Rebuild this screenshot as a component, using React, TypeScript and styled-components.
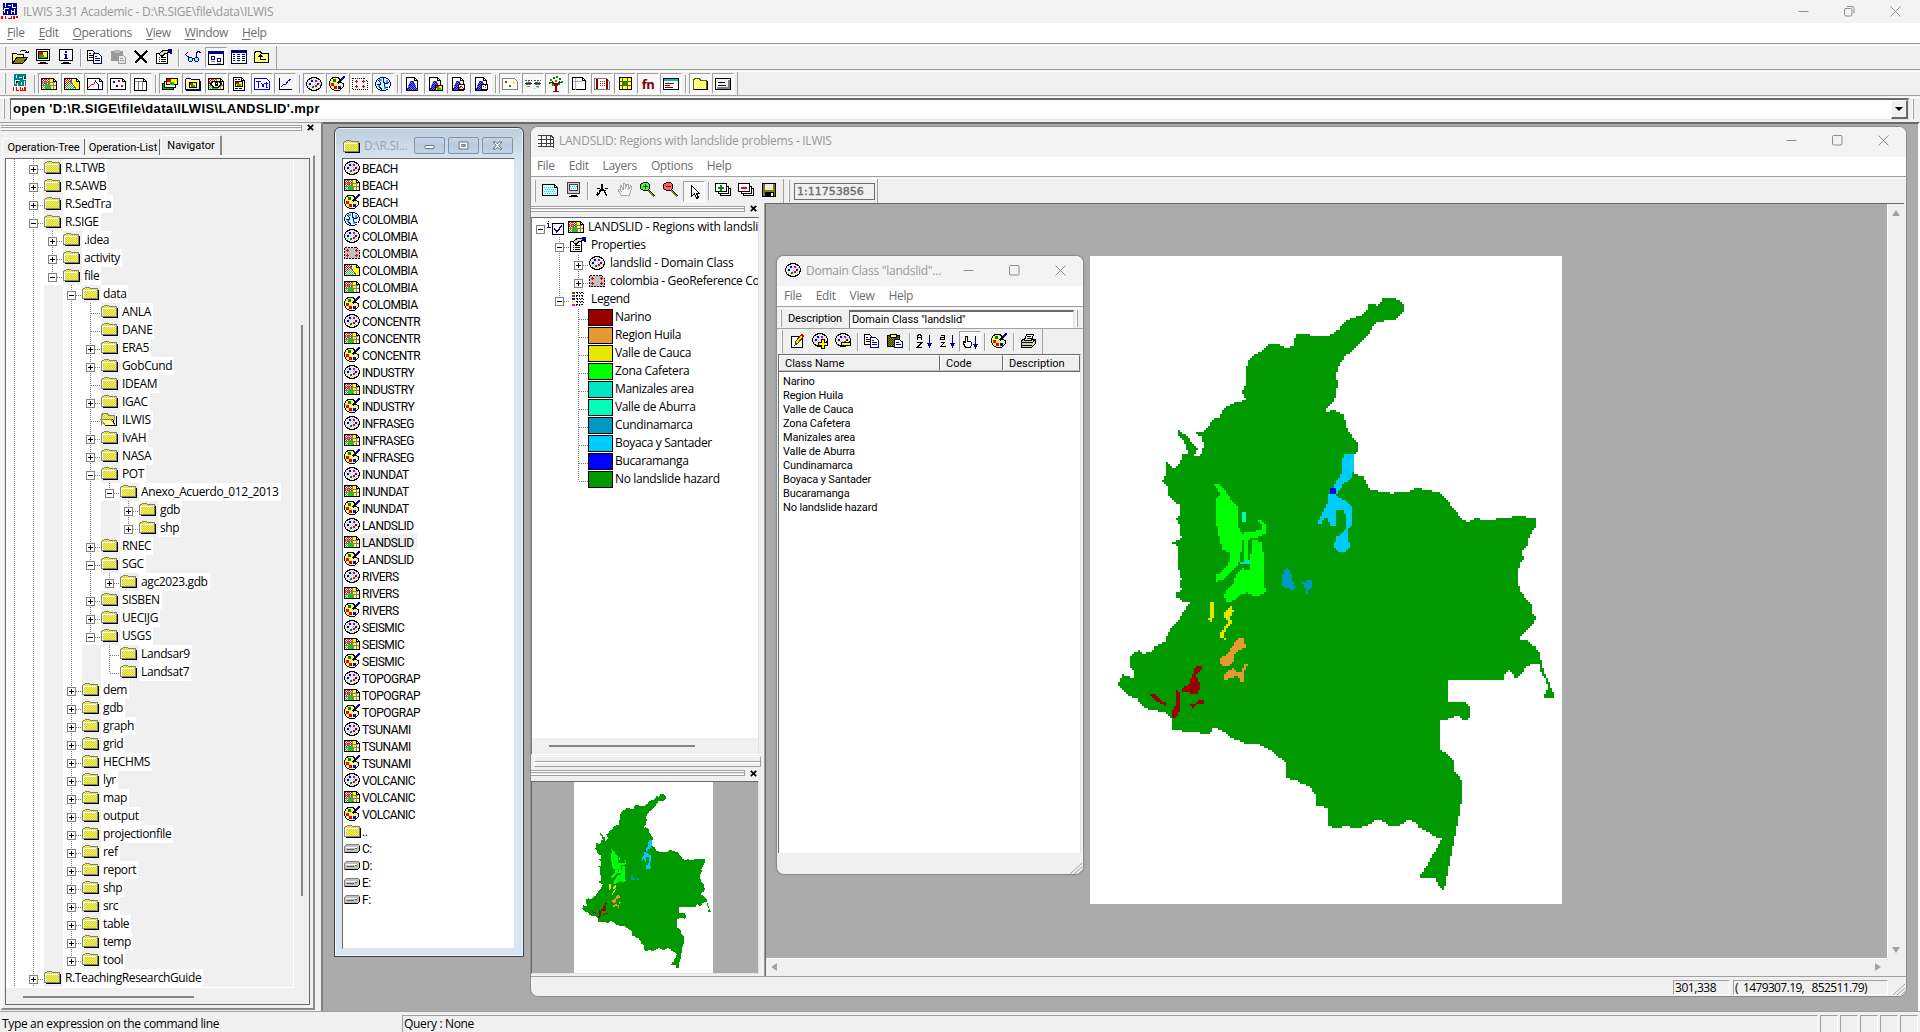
import React from "react";
import styled, { createGlobalStyle, css } from "styled-components";

const UI = `"Open Sans", "Noto Sans", sans-serif`;
const MS = `"Roboto", "Liberation Sans", sans-serif`;
const FACE = "#f0f0f0";
const DESK = "#ababab";

const Global = createGlobalStyle`
  html, body { margin: 0; padding: 0; overflow: hidden; }
  * { box-sizing: border-box; }
  body { font-family: ${UI}; font-size: 12px; color: #000; }
`;

/* ---------- icons ---------- */

const Defs = styled.svg`
  position: absolute;
  width: 0;
  height: 0;
`;

const dither: [string, string, string][] = [
  ["dR", "#ff0000", "#fff"],
  ["dG", "#00e000", "#fff"],
  ["dY", "#ffff00", "#fff"],
  ["dF", "#ffff00", "#c8c890"],
  ["dK", "#d4d4d4", "#fff"],
  ["dB", "#0000b0", "#7070ff"],
  ["dC", "#00e0e0", "#fff"],
  ["dO", "#808000", "#404000"],
];

const PatternDefs = () => (
  <Defs aria-hidden="true">
    <defs>
      {dither.map(([id, a, b]) => (
        <pattern key={id} id={id} width="2" height="2" patternUnits="userSpaceOnUse">
          <rect width="2" height="2" fill={b} />
          <rect width="1" height="1" fill={a} />
          <rect x="1" y="1" width="1" height="1" fill={a} />
        </pattern>
      ))}
    </defs>
  </Defs>
);

const IconSvg = styled.svg`
  display: block;
  flex: none;
  width: 16px;
  height: 16px;
  shape-rendering: crispEdges;
  overflow: visible;
`;

const page = "M.5 2.5h12l3 3v8h-15z";
const tall = "M2.5 1.5h8l3 3v10h-11z";

const Dots = ({ p, c, s = 2 }: { p: number[][]; c: string[]; s?: number }) => (
  <>
    {p.map(([x, y], i) => (
      <rect key={i} x={x} y={y} width={s} height={s} fill={c[i % c.length]} />
    ))}
  </>
);

const Doc = ({ x, y, s = "#000080" }: { x: number; y: number; s?: string }) => (
  <g transform={`translate(${x} ${y})`}>
    <path d="M.5.5h5l3 3v7h-8z" fill="#fff" stroke={s} />
    <path d="M2 3.5h2M2 5.5h5M2 7.5h5" stroke={s} />
  </g>
);

const RasterBody = () => (
  <>
    <path d={page} fill="#fff" stroke="#000" />
    <rect x="1" y="3" width="7" height="6" fill="url(#dR)" />
    <rect x="4" y="8" width="6" height="5" fill="#00e000" />
    <rect x="1" y="9" width="3" height="4" fill="url(#dG)" />
    <rect x="9" y="3" width="3" height="6" fill="#ffff00" />
    <rect x="10" y="8" width="5" height="5" fill="url(#dY)" />
    <path d="M4.5 3v10M8.5 3v10M12.5 6v7M1 6.5h13M1 9.5h14" stroke="#808070" />
    <path d="M12.5 2.5v3h3" fill="none" stroke="#000" />
  </>
);

const MiniMap = ({ x, y }: { x: number; y: number }) => (
  <g transform={`translate(${x} ${y})`}>
    <path d="M.5.5h7v5h-7z" fill="#ffff00" stroke="#000" />
    <rect x="1" y="1" width="3" height="2" fill="#ff0000" />
    <rect x="2" y="3" width="4" height="2" fill="#00c000" />
  </g>
);

const DomainBody = ({ x = 0, y = 0 }: { x?: number; y?: number }) => (
  <g transform={`translate(${x} ${y})`}>
    <path d="M5 2h6l3 2 1 3v3l-2 3-2 1H5l-3-2-1-3V6l2-3z" fill="url(#dK)" />
    <path
      d="M5 1.500h6M3 2.500h3M10 2.500h3M2 3.500h2M12 3.500h2M1.500 4v2M14.500 4v2M.500 6v4M15.500 6v4M14.500 9v3M1.500 10v2M2 12.500h2M12 12.500h2M3 13.500h3M10 13.500h3M5 14.500h6"
      stroke="#000"
    />
    <Dots
      p={[[5, 4], [9, 4], [3, 7], [11, 7], [6, 10], [9, 9]]}
      c={["#0000ff", "#c000c0", "#0000c0", "#202060", "#008000", "#e00000"]}
    />
  </g>
);

const PaletteBody = () => (
  <>
    <path
      d="M4.5 1.5h4l2 1v2l1 2 3 1v3l-2 2-2 2h-5l-3-2-2-3v-4l2-3z"
      fill="url(#dY)"
      stroke="#000"
    />
    <Dots
      p={[[4, 3], [2, 7], [5, 10], [9, 10]]}
      c={["#008000", "#ff0000", "#e00000", "#0000ff"]}
      s={3}
    />
    <path d="M8.5 7.5l3-3" stroke="#000" strokeWidth="2" />
    <path d="M11.5 4.5l4-4" stroke="#0000c0" strokeWidth="1.6" />
  </>
);

const FolderShape = () => (
  <>
    <path d="M2 14h14V5" fill="none" stroke="#000" strokeWidth="1.6" />
    <path d="M.5 13.5v-9l1-1h1l1-1.500h4l1 1.500h6.500v10z" fill="url(#dF)" stroke="#808080" />
    <path d="M1.500 12.500v-7.500h12" fill="none" stroke="#fff" />
  </>
);

const Histogram = ({ corner }: { corner?: string }) => (
  <>
    <path d={tall} fill="#fff" stroke="#000" />
    <path d="M3 13c2 0 2-8 5-8s3 8 5 8v1h-10z" fill="url(#dB)" stroke="#000080" strokeWidth=".6" />
    <path d="M10.500 1.500v3h3M2 14.500h12" stroke="#000" fill="none" />
    {corner === "map" && <MiniMap x={8} y={9} />}
    {corner === "poly" && (
      <g>
        <path d="M8.500 8.500h6v5h-6z" fill="#fff" stroke="#000" />
        <path d="M9 13l2-3 3 3" fill="none" stroke="#f00" />
      </g>
    )}
    {corner === "pts" && (
      <g>
        <path d="M8.500 8.500h6v5h-6z" fill="#fff" stroke="#000" />
        <Dots p={[[10, 10], [12, 11], [12, 9]]} c={["#0000ff", "#f00"]} s={1} />
      </g>
    )}
  </>
);

const Layers = () => (
  <>
    <path d="M5.500 6.500h10v7h-10z" fill="#fff" stroke="#000" />
    <path d="M3.500 4.500h10v7h-10z" fill="#fff" stroke="#000" />
    <path d="M.500 1.500h11v7.500h-11z" fill="#fff" stroke="#000" />
  </>
);

const Magnifier = ({ c }: { c: string }) => (
  <>
    <path d="M8.500 8.500l6 6" stroke="#808000" strokeWidth="2" />
    <path d="M9.500 8.500l6 6" stroke="#000" />
    <path d="M3.500.5h4l2 2v4l-2 2h-4l-3-2v-4z" fill={c} stroke="#000" />
  </>
);

const SortArrow = () => (
  <>
    <path d="M13.500 2v9" stroke="#000080" />
    <path d="M11 10h5v1h-1v1.500h-1v2h-1v-2h-1V11h-1z" fill="#000080" />
  </>
);

const icons: Record<string, React.ReactNode> = {
  logo: (
    <>
      <rect x="1" y="0" width="14" height="12" fill="#0000a8" />
      <path
        d="M3.500 0v4M6 2.500h3M6.500 5.500h-4v4M10.500 1v3h3M9 6.500v4M12.500 6v5M5.500 8v3M1 7.500h2M10 8.500h3"
        stroke="#fff"
      />
      <path d="M0 13v3M3.500 13v3M5.500 15.500h3M9.500 13v3M12 13v3M14 14h2" stroke="#e00000" strokeWidth="1.500" />
    </>
  ),
  logoTeal: (
    <>
      <rect x="2" y="-1" width="12" height="12" fill="#008080" />
      <path
        d="M4.500 0v3M7 2.500h3M7.500 5.500h-4v3M11.500 1v3h3M9 6.500v3M12.500 6v5M5.500 8v3"
        stroke="#e8f4f4"
      />
      <path d="M1.500 12v4M4 12v4M4 15.500h2.500M8 12v3.500h4V12M13.500 12v4M10 13v3" stroke="#ff0000" fill="none" />
    </>
  ),
  open: (
    <>
      <path d="M.5 13.500v-9h4l1 1h6v3" fill="url(#dY)" stroke="#000" />
      <path d="M1 14l4-6h11l-5 6z" fill="#808000" stroke="#000" />
      <path d="M8.500 2.500l2-1.500h3l2 3M13 3.500h3v-2" fill="none" stroke="#000" />
    </>
  ),
  screenMap: (
    <>
      <path d="M1.500.5h13v11h-13z" fill="#fff" stroke="#000" />
      <path d="M5 13.500h6M3 14.500h10" stroke="#000" />
      <rect x="4" y="3" width="4" height="3" fill="#f00" />
      <rect x="4" y="6" width="8" height="4" fill="#00c000" />
      <rect x="9" y="4" width="3" height="4" fill="#ff0" />
      <path d="M3.500 2.500h9v7h-9z" fill="none" stroke="#000" />
    </>
  ),
  info: (
    <>
      <path d="M1.500.5h13v11h-13z" fill="#fff" stroke="#000" />
      <path d="M5 13.500h6M3 14.500h10" stroke="#000" />
      <path d="M7 2h2v2h-2zM6 5h3v4h1v1H6V9h1V6H6z" fill="#0000d0" />
    </>
  ),
  copy: (
    <>
      <Doc x={0} y={1} s="#000" />
      <Doc x={6} y={4} />
    </>
  ),
  pasteGray: (
    <>
      <path d="M1 2h12v10H1z" fill="#9a9a9a" />
      <path d="M4 1h6v3H4z" fill="#b8b8b8" />
      <path d="M8.500 6.500h5l2 2v6h-7z" fill="#e8e8e8" stroke="#9a9a9a" />
      <path d="M10 9.500h3M10 11.500h4" stroke="#9a9a9a" />
    </>
  ),
  paste: (
    <>
      <path d="M.5 2.500h12v11h-12z" fill="url(#dO)" stroke="#000" />
      <path d="M3.500 1.500h6v2.500h-6z" fill="#ffff60" stroke="#000" />
      <path d="M7.500 6.500h5l3 2.500v5.500h-8z" fill="#fff" stroke="#000080" />
      <path d="M9 9.500h3M9 11.500h5" stroke="#000080" />
    </>
  ),
  cross: <path d="M2 2l12 12M14 2L2 14" stroke="#000" strokeWidth="2" />,
  props: (
    <>
      <path d="M.5 4.500h11v10h-11z" fill="#fff" stroke="#000" />
      <path d="M2.500 8.500h1.500M5 8.500h5M2.500 10.500h1.500M5 10.500h5M2.500 12.500h1.500M5 12.500h5" stroke="#000" />
      <path d="M3 5l4-3.500h5l1 2-4 1-3 3z" fill="#d8d8d8" stroke="#000" />
      <path d="M12 0h4v5h-2V3h-2z" fill="#000080" />
    </>
  ),
  glasses: (
    <>
      <path
        d="M4 8.500L.5 5.500 2.500 3.500M12 9l-1-5 3-2 1.500 2M7 9.500h2"
        fill="none"
        stroke="#000080"
      />
      <path d="M4.500 8.500h2l1 1v2l-1 1h-2l-1-1v-2zM10.500 8.500h2l1 1v2l-1 1h-2l-1-1v-2z" fill="#80ffff" stroke="#000080" />
    </>
  ),
  largeIcons: (
    <>
      <path d="M.5 1.500h15v13H.5z" fill="#fff" stroke="#000" />
      <path d="M0 2h16" stroke="#000080" strokeWidth="3" />
      <path d="M3.500 6.500h3v3h-3zM9.500 8.500h3v3h-3z" fill="#fff" stroke="#000080" />
      <path d="M3 11.500h4M9 13.500h4" stroke="#8080a0" />
    </>
  ),
  details: (
    <>
      <path d="M.5 1.500h15v13H.5z" fill="#fff" stroke="#000" />
      <path d="M0 2h16" stroke="#000080" strokeWidth="3" />
      <path d="M2 5.500h2M2 7.500h2M2 9.500h2M2 11.500h2M6 5.500h3M6 7.500h3M6 9.500h3M6 11.500h3M11 5.500h3M11 7.500h3M11 9.500h3M11 11.500h3" stroke="#000080" />
    </>
  ),
  upFolder: (
    <>
      <path d="M.5 13.500v-9l1-2h5l1 2h7v9z" fill="#ffff80" stroke="#000" />
      <path d="M6.500 7v3.500h5" fill="none" stroke="#000" />
      <path d="M6 5h1v1h1v1h1v1H4V7h1V6h1z" fill="#000" />
    </>
  ),
  raster: <RasterBody />,
  polygon: (
    <>
      <path d={page} fill="#fff" stroke="#000" />
      <path d="M1 3h7L4 10l-3 1z" fill="url(#dR)" />
      <path d="M1 13l5-5 4 2v3z" fill="url(#dG)" />
      <path d="M10 4l2 0 3 3v6h-2l-4-6z" fill="#ffff00" />
      <path d="M1 12l5-5 2-3M7 6l5 7" stroke="#606060" fill="none" />
      <path d="M12.500 2.500v3h3" fill="none" stroke="#000" />
    </>
  ),
  segment: (
    <>
      <path d={page} fill="#fff" stroke="#000" />
      <path d="M1 12l3-3 3-1 2-4" stroke="#f00" fill="none" />
      <path d="M8 5l3 3 1 5" stroke="#0000ff" fill="none" />
      <path d="M12.500 2.500v3h3" fill="none" stroke="#000" />
    </>
  ),
  point: (
    <>
      <path d={page} fill="#fff" stroke="#000" />
      <Dots p={[[3, 5], [8, 4], [6, 9], [11, 9]]} c={["#0000ff", "#f00"]} />
      <path d="M12.500 2.500v3h3" fill="none" stroke="#000" />
    </>
  ),
  table: (
    <>
      <path d="M1.500 2.500h9l3 3v9h-12z" fill="#fff" stroke="#000" />
      <path d="M2 5.500h8M5.500 6v8M9.500 6v8" stroke="#808080" />
      <path d="M10.500 2.500v3h3" fill="none" stroke="#000" />
    </>
  ),
  mapList: (
    <>
      <path d="M.5 7.500h11v6H.5z" fill="#00c000" stroke="#000" />
      <path d="M2.500 5.500h11v6h-11z" fill="#fff" stroke="#000" />
      <path d="M4.500 2.500h11v6h-11z" fill="#ffff00" stroke="#000" />
      <path d="M5 3h4v3H5z" fill="#f00" />
      <path d="M8 6h4v3H8z" fill="#00c000" />
    </>
  ),
  objColl: (
    <>
      <path d="M.5 13.500v-10l1-1h4l1 1h8v10z" fill="#ffff90" stroke="#0000a0" />
      <path d="M1 14.500h14.500V5" stroke="#000" fill="none" />
      <MiniMap x={4} y={6} />
    </>
  ),
  mapView: (
    <>
      <RasterBody />
      <path d="M2.500 8l3-3h5l3 3-3 3h-5z" fill="#fff" stroke="#000" />
      <path d="M7 6h3v4H7z" fill="#000" />
      <path d="M8 7h1v1H8z" fill="#fff" />
    </>
  ),
  layout: (
    <>
      <path d={tall} fill="#fff" stroke="#000" />
      <path d="M4 3.500h5" stroke="#000" strokeDasharray="2 1" />
      <path d="M4 12.500h7" stroke="#000" strokeDasharray="3 1" />
      <path d="M10.500 1.500v3h3" fill="none" stroke="#000" />
      <MiniMap x={4} y={5} />
    </>
  ),
  txt: (
    <>
      <path d="M.5 2.500h12l3 3v8H.5z" fill="#fff" stroke="#0000ff" />
      <path d="M2 5.500h5M4.500 6v6M7.500 7.500l3 4M10.500 7.500l-3 4M12.500 5.500v6h1.500M11 7.500h3" stroke="#0000ff" fill="none" />
    </>
  ),
  graph: (
    <>
      <path d="M2.500 2v11.500h12" fill="none" stroke="#000" />
      <path d="M4 11l3-3 2 0 2-3 3-2" fill="none" stroke="#0000e0" />
    </>
  ),
  domain: <DomainBody />,
  domainAdd: (
    <>
      <DomainBody y={-1} />
      <path d="M9.500 6.500h3v3h3v3h-3v3h-3v-3h-3v-3h3z" fill="#ffff00" stroke="#000" />
    </>
  ),
  domainDel: (
    <>
      <DomainBody y={-1} />
      <path d="M6.500 9.500h9v3h-9z" fill="#ffff00" stroke="#000" />
    </>
  ),
  palette: <PaletteBody />,
  georef: (
    <>
      <path d={page} fill="#fff" stroke="#000" strokeDasharray="1 1" />
      <path d="M3 5.500h3M4.500 4v3M10 5.500h3M11.500 4v3M3 10.500h3M4.500 9v3M10 10.500h3M11.500 9v3" stroke="#e00000" />
    </>
  ),
  georefGray: (
    <>
      <path d={page} fill="#c0c0c0" stroke="#000" strokeDasharray="2 1" />
      <path d="M3 5.500h1M3.500 5v1M2 5.500h3M3.500 4v3M11 5.500h3M12.500 4v3M2 10.500h3M3.500 9v3M11 10.500h3M12.500 9v3" stroke="#e00000" />
    </>
  ),
  globe: (
    <>
      <path d="M5.500 1.500h5l3 2 2 3v3l-2 3-3 2h-5l-3-2-2-3v-3l2-3z" fill="#d8ffff" stroke="#000080" />
      <path d="M3 4l3 3-2 3 3 4M9 2l-1 4 3 2 3-2M9 8l1 3 3 1M2 8h4" stroke="#0000d0" fill="none" />
      <path d="M4 3h3v2H4zM11 4h2v3h-2zM9 10h2v3H9zM3 9h2v2H3z" fill="#20a060" opacity=".8" />
    </>
  ),
  hist: <Histogram />,
  histMap: <Histogram corner="map" />,
  histPoly: <Histogram corner="poly" />,
  histPts: <Histogram corner="pts" />,
  sampleSet: (
    <>
      <path d={page} fill="#fff" stroke="#808080" />
      <Dots p={[[3, 5], [11, 6], [7, 9]]} c={["#f00", "#ffe000", "#00a000"]} />
    </>
  ),
  stereo: (
    <>
      <path d="M0 4.500h7M9 4.500h7" stroke="#505050" strokeDasharray="2 1" />
      <path d="M1 6h5v3H1zM10 6h5v3h-5z" fill="#606060" />
      <path d="M0 7.500h7M9 7.500h7" stroke="#303030" />
      <Dots p={[[3, 5], [12, 5], [3, 8], [12, 8], [2, 6], [13, 6]]} c={["#40c0c0", "#40c0c0", "#c06060", "#c06060"]} s={1} />
      <path d="M2 10.500h3M11 10.500h3" stroke="#808080" />
      <path d="M9 12.500h1M12 11.500h2" stroke="#40e0e0" />
    </>
  ),
  tree: (
    <>
      <path d="M8 7v8M4 6l4 4 4-4M5 15.500h6" stroke="#900000" strokeWidth="1.600" fill="none" />
      <Dots p={[[2, 3], [5, 1], [8, 0], [11, 2], [13, 5], [1, 6], [7, 4], [10, 7], [4, 8]]} c={["#00a020", "#008000"]} />
    </>
  ),
  table2: (
    <>
      <path d="M1.500 1.500h10l3 3v9h-13z" fill="#fff" stroke="#000" />
      <path d="M2 5.500h9M4.500 2v12" stroke="#b0b0b0" />
      <path d="M11.500 1.500v3h3" fill="none" stroke="#000" />
    </>
  ),
  matrix: (
    <>
      <path d={page} fill="#fff" stroke="#808080" />
      <path d="M4 4h-1v8h1M12 4h1v8h-1" stroke="#800000" fill="none" strokeWidth="2" />
      <Dots p={[[6, 5], [8, 5], [10, 5], [6, 7], [8, 7], [10, 7], [6, 9], [8, 9], [10, 9]]} c={["#c00000"]} s={1} />
    </>
  ),
  filter: (
    <>
      <path d="M2.500 1.500h12v12h-12z" fill="#ffff40" stroke="#000" />
      <rect x="6" y="5" width="5" height="5" fill="#00a000" />
      <path d="M5.500 2v11M10.500 2v11M3 5.500h11M3 9.500h11" stroke="#606000" />
    </>
  ),
  script: (
    <>
      <path d="M.5 2.500h15v11H.5z" fill="#fff" stroke="#000" />
      <path d="M1 4h14" stroke="#00c0c0" strokeWidth="2" />
      <path d="M2 7.500h9M2 9.500h5M2 11.500h8" stroke="#900000" />
    </>
  ),
  yFolder: (
    <>
      <path d="M1.500 13.500v-9l1-2h5l1 2h6v9z" fill="url(#dY)" stroke="#606000" />
      <path d="M2 13.500h13v-9" stroke="#000" fill="none" />
    </>
  ),
  form: (
    <>
      <path d="M.5 2.500h15v11H.5z" fill="#f0f0f0" stroke="#000" />
      <path d="M3 6.500h7M3 9.500h8" stroke="#000" />
      <path d="M2 12h12v-8" stroke="#808080" fill="none" strokeWidth="2" />
    </>
  ),
  folder: <FolderShape />,
  folderOpen: (
    <>
      <path d="M.5 13.500v-9l1-2h5l1 2h6v4" fill="url(#dF)" stroke="#808080" />
      <path d="M0 8.500h10l4 5.500H4z" fill="#ffff90" stroke="#808080" />
      <path d="M15 5v9.500h-11M11.500 8l2 5" stroke="#000" fill="none" />
    </>
  ),
  drive: (
    <>
      <path d="M.5 6.500l2-2h12l1 1v5l-2 2H.5z" fill="#c0c0c0" stroke="#808080" />
      <path d="M1 12.500h12.500l2-2V6" stroke="#000" fill="none" />
      <path d="M2 7.500h11" stroke="#fff" />
      <path d="M3 9.500h7" stroke="#606060" />
      <rect x="11" y="8" width="2" height="1" fill="#00a000" />
    </>
  ),
  gridPage: (
    <>
      <path d="M.5 2.500h12l3 3v8H.5z" fill="#fff" stroke="none" />
      <path d="M0 2.500h13l2 2v10M0 6.500h15M0 10.500h15M0 13.500h15M3.500 2v12M8.500 2v12M12.500 3v11" stroke="#404040" fill="none" />
    </>
  ),
  cyanPage: (
    <>
      <path d={page} fill="#d8ffff" stroke="#000" />
      <path d="M2 5.500h9M3 7.500h11M2 9.500h12M3 11.500h11" stroke="#20d8e8" strokeDasharray="1 1" />
      <path d="M12.500 2.500v3h3" fill="none" stroke="#000" />
    </>
  ),
  screenGray: (
    <>
      <path d="M2.500.5h12v11h-12z" fill="#d0d0d0" stroke="#404040" />
      <path d="M4.500 2.500h8v6h-8z" fill="#e0ffff" stroke="#404040" />
      <path d="M5 4.500h7M6 6.500h6" stroke="#20d8e8" strokeDasharray="1 1" />
      <path d="M6 13.500h6M4 14.500h9" stroke="#000" />
    </>
  ),
  measure: (
    <path
      d="M8 2v4M2.500 6.500h3M11 6.500h3M8 5.500L3.500 14M8 5.500L13 14M4 10.500L2.500 13M5 8.500h7"
      stroke="#000"
      strokeWidth="1.300"
      fill="none"
    />
  ),
  hand: (
    <path
      d="M4.500 13.500L1 8l1-1 2 2-1-5 1.500-.5L6 8V2l2-.5L8.500 7 10 2l1.500.5V8l2-4 1.500 1-2 6-1 3z"
      fill="#f8f8f8"
      stroke="#a8a8a8"
    />
  ),
  zoomIn: (
    <>
      <Magnifier c="#40ff40" />
      <path d="M3 4.500h5M5.500 2v5" stroke="#004000" strokeWidth="1.400" />
    </>
  ),
  zoomOut: (
    <>
      <Magnifier c="#ff6060" />
      <path d="M3 4.500h5" stroke="#600000" strokeWidth="1.400" />
    </>
  ),
  pointer: <path d="M5.500 2.500v11l3-3 2 5 2-1-2-4h3z" fill="#fff" stroke="#000" />,
  layerAdd: (
    <>
      <Layers />
      <path d="M3 5.500h6M6 2.500v6" stroke="#009000" strokeWidth="2" />
    </>
  ),
  layerDel: (
    <>
      <Layers />
      <path d="M3 5.500h6" stroke="#ff0000" strokeWidth="2" />
    </>
  ),
  save: (
    <>
      <path d="M1.500 1.500h13v13h-13z" fill="#808000" stroke="#000" />
      <rect x="4" y="2" width="8" height="6" fill="#e8e8e8" />
      <rect x="4" y="10" width="9" height="5" fill="#000" />
      <rect x="10" y="11" width="2" height="3" fill="#fff" />
    </>
  ),
  legend: (
    <>
      {["#f00", "#008000", "#00f", "#ff0", "#f0f"].map((c, i) => (
        <rect key={c} x="2" y={1 + i * 3} width="3" height="2" fill={c} />
      ))}
      <path
        d="M6 1.500h8M6 4.500h8M6 7.500h8M6 10.500h8M6 13.500h8"
        stroke="#000"
        strokeDasharray="2 1 1 1"
      />
      <path d="M7 2.500h7M6 5.500h7M7 8.500h7M7 11.500h7M6 14.500h6" stroke="#000" strokeDasharray="1 2" />
    </>
  ),
  edit: (
    <>
      <path d="M2.500 3.500h11v11h-11z" fill="#fff" stroke="#000" />
      <path d="M6 12l1-4 6-7 2 2-6 7z" fill="#ffe000" stroke="#604000" />
      <path d="M12.500 1.500l2 1.500" stroke="#e00000" strokeWidth="2" />
    </>
  ),
  sortAZ: (
    <>
      <path d="M1.500 7V3l1-1.500h2l1 1.500v4M2 4.500h3M1 9.500h5l-5 5h5" stroke="#000" strokeWidth="1.300" fill="none" />
      <SortArrow />
    </>
  ),
  sortaz: (
    <>
      <path d="M1.500 2.500h4v4h-4v-2h4M1.500 9.500h4l-4 4h5" stroke="#000" fill="none" />
      <SortArrow />
    </>
  ),
  sortHand: (
    <>
      <path d="M3.500 13.500l-2-4v-2l2 1V2.500h1.500V7l4 1v4l-1 2z" fill="#fff" stroke="#000" />
      <SortArrow />
    </>
  ),
  print: (
    <>
      <path d="M1 8l3-2h11v5l-3 3H1z" fill="#d0d0d0" stroke="#000" />
      <path d="M4.500 7l2-5.500h7l-2 5.500z" fill="#fff" stroke="#000" />
      <path d="M1 9.500h11.500l2.500-3M1 12.500h11M7 3.500h4M6.500 5.500h4" stroke="#000" fill="none" />
      <rect x="8" y="10" width="3" height="2" fill="#e0e000" />
    </>
  ),
};

const FnGlyph = styled.b`
  font: bold 13px "Open Sans", sans-serif;
  color: #800000;
  letter-spacing: -0.5px;
`;

const Icon = ({ name }: { name: string }) =>
  name === "fn" ? (
    <FnGlyph>fn</FnGlyph>
  ) : (
    <IconSvg viewBox="0 0 16 16" aria-hidden="true">
      {icons[name]}
    </IconSvg>
  );

/* ---------- shared chrome ---------- */

const Frame = styled.div`
  width: 1920px;
  height: 1032px;
  display: flex;
  flex-direction: column;
  background: ${FACE};
  overflow: hidden;
`;

const TitleBar = styled.div<{ $h: number; $pad: string }>`
  display: flex;
  align-items: center;
  flex: none;
  height: ${(p) => p.$h}px;
  padding: ${(p) => p.$pad};
  background: #f3f3f3;
  color: #989898;
`;

const TitleText = styled.span<{ $ml: number; $ls?: number }>`
  margin-left: ${(p) => p.$ml}px;
  flex: 1;
  white-space: nowrap;
  letter-spacing: ${(p) => p.$ls ?? -0.26}px;
`;

const CaptionButtons = styled.div<{ $gap: number }>`
  display: flex;
  gap: ${(p) => p.$gap}px;
`;

const CaptionSvg = styled.svg`
  display: block;
  width: 11px;
  height: 11px;
  fill: none;
  stroke: #8e8e8e;
`;

const Captions = ({ gap, restore }: { gap: number; restore?: boolean }) => (
  <CaptionButtons $gap={gap}>
    <CaptionSvg viewBox="0 0 11 11">
      <path d="M.5 5.500h10" />
    </CaptionSvg>
    <CaptionSvg viewBox="0 0 11 11">
      {restore ? (
        <>
          <rect x=".5" y="2.500" width="7.500" height="7.500" rx="1.500" />
          <path d="M3 .5h5a2 2 0 0 1 2 2v5" />
        </>
      ) : (
        <rect x=".5" y=".5" width="9.500" height="9.500" rx="1" />
      )}
    </CaptionSvg>
    <CaptionSvg viewBox="0 0 11 11">
      <path d="M.5.5l10 10M10.500.5l-10 10" />
    </CaptionSvg>
  </CaptionButtons>
);

const MenuBar = styled.div<{ $h: number; $pad: number; $gap: number }>`
  display: flex;
  align-items: center;
  flex: none;
  height: ${(p) => p.$h}px;
  padding-left: ${(p) => p.$pad}px;
  padding-bottom: 2px;
  gap: ${(p) => p.$gap}px;
  background: #fff;
  color: #6d6d6d;
  white-space: nowrap;
  letter-spacing: -0.34px;
`;

const Mnemonic = styled.span`
  text-decoration: underline;
  text-underline-offset: 2px;
  text-decoration-thickness: 1px;
`;

const Menu = ({ items, h, pad, gap, keys }: { items: string[]; h: number; pad: number; gap: number; keys?: boolean }) => (
  <MenuBar $h={h} $pad={pad} $gap={gap}>
    {items.map((t) => (
      <span key={t}>
        {keys ? (
          <>
            <Mnemonic>{t[0]}</Mnemonic>
            {t.slice(1)}
          </>
        ) : (
          t
        )}
      </span>
    ))}
  </MenuBar>
);

const Rule = styled.div`
  flex: none;
  height: 3px;
  border-top: 1px solid #a0a0a0;
  border-bottom: 1px solid #fff;
`;

const Bar = styled.div<{ $h: number; $pad: number }>`
  display: flex;
  align-items: center;
  flex: none;
  height: ${(p) => p.$h}px;
  padding-left: ${(p) => p.$pad}px;
  background: ${FACE};
`;

const Handle = styled.div<{ $mr: number; $ml?: number }>`
  width: 2px;
  align-self: stretch;
  margin: 1px ${(p) => p.$mr}px 1px ${(p) => p.$ml ?? 0}px;
  border-left: 1px solid #fff;
  border-right: 1px solid #a0a0a0;
`;

const Sep = styled.div`
  width: 2px;
  height: 18px;
  margin: 0 2px;
  border-left: 1px solid #a0a0a0;
  border-right: 1px solid #fff;
`;

const ToolButton = styled.div<{ $on?: boolean }>`
  display: flex;
  align-items: center;
  justify-content: center;
  flex: none;
  width: 23px;
  height: 21px;
  padding: 0 1px 2px 0;
  ${(p) =>
    p.$on &&
    css`
      background: #f7f7f7;
      border: 1px solid #a0a0a0;
      border-right-color: #fff;
      border-bottom-color: #fff;
      width: 22px;
      margin-right: 1px;
      padding: 0;
    `}
`;

const Tools = ({ list, boxed }: { list: string; boxed?: boolean }) => (
  <>
    {list.split(" ").map((n, i) =>
      n === "|" ? (
        <Sep key={i} />
      ) : (
        <ToolButton key={i} $on={n.startsWith("*") || (boxed && n !== "logoTeal")}>
          <Icon name={n.replace("*", "")} />
        </ToolButton>
      )
    )}
  </>
);

/* ---------- command line ---------- */

const Command = styled.div`
  display: flex;
  flex: none;
  height: 24px;
  padding: 0 6px 2px 3px;
`;

const CommandField = styled.div`
  flex: 1;
  display: flex;
  align-items: center;
  justify-content: space-between;
  padding-left: 2px;
  background: #fff;
  border: 1px solid #696969;
  border-top-width: 2px;
  border-right-color: #e3e3e3;
  border-bottom-color: #e3e3e3;
  font: bold 13px "Liberation Sans", sans-serif;
`;

const CommandText = styled.span`
  letter-spacing: 0.34px;
  padding-bottom: 2px;
`;

const DropButton = styled.div`
  display: flex;
  align-items: center;
  justify-content: center;
  width: 17px;
  height: 19px;
  background: ${FACE};
  border: 1px solid #fff;
  border-right: 2px solid #696969;
  border-bottom: 2px solid #696969;
  &::after {
    content: "";
    border: 4px solid transparent;
    border-top-color: #000;
    border-bottom: 0;
  }
`;

/* ---------- navigator panel ---------- */

const Body = styled.div`
  display: flex;
  flex: none;
  height: 889px;
`;

const Side = styled.div`
  display: flex;
  flex-direction: column;
  flex: none;
  width: 323px;
  border-top: 1px solid #a0a0a0;
  border-right: 2px solid #808080;
  padding: 1px 6px 1px 1px;
`;

const GripRow = styled.div<{ $h: number; $pb: number }>`
  display: flex;
  flex: none;
  align-items: center;
  height: ${(p) => p.$h}px;
  padding-bottom: ${(p) => p.$pb}px;
`;

const GripLines = styled.div<{ $w: number }>`
  width: ${(p) => p.$w}px;
  height: 6px;
  border: 1px solid #a0a0a0;
  border-width: 1px 1px 1px 0;
  background: linear-gradient(#fff 0 1px, #a0a0a0 1px 2px, ${FACE} 2px 3px, #fff 3px 4px);
`;

const CloseX = styled.svg`
  width: 7px;
  height: 7px;
  margin-left: 5px;
  stroke: #000;
  stroke-width: 1.7;
`;

const Grip = ({ w, h, pb = 0 }: { w: number; h: number; pb?: number }) => (
  <GripRow $h={h} $pb={pb}>
    <GripLines $w={w} />
    <CloseX viewBox="0 0 7 7">
      <path d="M.8.8l5.400 5.400M6.200.8L.8 6.200" />
    </CloseX>
  </GripRow>
);

const TabStrip = styled.div`
  display: flex;
  align-items: flex-end;
  flex: none;
  height: 24px;
  padding-left: 1px;
  gap: 1px;
`;

const Tab = styled.div<{ $w: number; $on?: boolean }>`
  width: ${(p) => p.$w}px;
  height: ${(p) => (p.$on ? 20 : 17)}px;
  padding-bottom: ${(p) => (p.$on ? 1 : 0)}px;
  display: flex;
  align-items: center;
  justify-content: center;
  border: 1px solid #fff;
  border-right: ${(p) => (p.$on ? "2px solid #8a8a8a" : "1px solid #696969")};
  border-bottom: 0;
  border-radius: 2px 2px 0 0;
  font: 11px ${MS};
  white-space: nowrap;
`;

const TabPage = styled.div`
  display: flex;
  flex: 1;
  min-height: 0;
  border: 1px solid #fff;
  border-right: 2px solid #8a8a8a;
  border-bottom: 2px solid #8a8a8a;
  padding: 2px 3px 3px 3px;
`;

const TreeBox = styled.div`
  display: grid;
  grid-template-columns: 288px 1fr;
  grid-template-rows: 829px 1fr;
  flex: 1;
  border: 1px solid #696969;
  background: ${FACE};
`;

const TreeRows = styled.div`
  border-right: 1px solid #fff;
  border-bottom: 1px solid #fff;
  overflow: hidden;
`;

const VScroll = styled.div`
  display: flex;
  justify-content: center;
  padding: 166px 0 0 1px;
  &::after {
    content: "";
    width: 2px;
    height: 571px;
    background: #858585;
  }
`;

const HScroll = styled.div<{ $pad: string; $w: number }>`
  padding: ${(p) => p.$pad};
  &::after {
    content: "";
    display: block;
    width: ${(p) => p.$w}px;
    height: 2px;
    background: #858585;
  }
`;

const Row = styled.div`
  display: flex;
  height: 18px;
`;

const dotV = "repeating-linear-gradient(#808080 0 1px, transparent 1px 2px)";
const dotH = "repeating-linear-gradient(90deg, #808080 0 1px, transparent 1px 2px)";

const Indent = styled.div<{ $v: "none" | "full" | "top" | "bottom" | "blank"; $h?: boolean }>`
  display: flex;
  flex: none;
  align-items: center;
  justify-content: flex-start;
  width: 19px;
  height: 18px;
  padding: 2px 0 0 4px;
  background-color: ${(p) => (p.$v === "none" ? FACE : "#fff")};
  background-repeat: no-repeat;
  background-image: ${(p) =>
    [p.$v === "none" || p.$v === "blank" ? "none" : dotV, p.$h ? dotH : "none"].join(", ")};
  background-size: 1px ${(p) => (p.$v === "full" ? 18 : p.$v === "top" ? 10 : 8)}px, 11px 1px;
  background-position: 8px ${(p) => (p.$v === "bottom" ? 10 : 0)}px, 9px 10px;
`;

const Expander = styled.svg`
  width: 9px;
  height: 9px;
  shape-rendering: crispEdges;
`;

const Box = ({ open }: { open: boolean }) => (
  <Expander viewBox="0 0 9 9">
    <rect x=".5" y=".5" width="8" height="8" fill="#fff" stroke="#808080" />
    <path d={open ? "M2 4.500h5" : "M2 4.500h5M4.500 2v5"} stroke="#000" />
  </Expander>
);

const IconCell = styled.div<{ $w: number }>`
  width: ${(p) => p.$w}px;
  flex: none;
`;

const TreeLabel = styled.span`
  height: 18px;
  padding: 0 2px;
  background: #fff;
  line-height: 17px;
  white-space: nowrap;
  letter-spacing: -0.38px;
`;

/* columns: "|" running line, "." ended branch, "_" empty, "+"/"-" expander, "t" leaf; "P", "M" and "L" are the last child of each kind */
const navTree: [string, string][] = [
  ["|+", "R.LTWB"], ["|+", "R.SAWB"], ["|+", "R.SedTra"], ["|-", "R.SIGE"],
  ["||+", ".idea"], ["||+", "activity"], ["||M", "file"], ["||.-", "data"],
  ["||.|t", "ANLA"], ["||.|t", "DANE"], ["||.|+", "ERA5"], ["||.|+", "GobCund"],
  ["||.|t", "IDEAM"], ["||.|+", "IGAC"], ["||.|t", "ILWIS"], ["||.|+", "IvAH"],
  ["||.|+", "NASA"], ["||.|-", "POT"], ["||.||M", "Anexo_Acuerdo_012_2013"],
  ["||.||.+", "gdb"], ["||.||.P", "shp"], ["||.|+", "RNEC"], ["||.|-", "SGC"],
  ["||.||P", "agc2023.gdb"], ["||.|+", "SISBEN"], ["||.|+", "UECIJG"], ["||.|M", "USGS"],
  ["||.|.t", "Landsar9"], ["||.|.L", "Landsat7"],
  ...["dem", "gdb", "graph", "grid", "HECHMS", "lyr", "map", "output", "projectionfile", "ref", "report", "shp", "src", "table", "temp"].map(
    (n) => ["||.+", n] as [string, string]
  ),
  ["||.P", "tool"], ["|+", "R.TeachingResearchGuide"],
];

const Columns = ({ cols }: { cols: string }) => (
  <>
    {cols.split("").map((c, i) => {
      const last = "PML".includes(c);
      const node = "+-tPML".includes(c);
      return (
        <Indent key={i} $v={c === "." ? "none" : c === "_" ? "blank" : last ? "top" : "full"} $h={node}>
          {"+-PM".includes(c) && <Box open={"-M".includes(c)} />}
        </Indent>
      );
    })}
  </>
);

const Navigator = () => (
  <Side>
    <Grip w={301} h={7} />
    <TabStrip>
      <Tab $w={83}>Operation-Tree</Tab>
      <Tab $w={74}>Operation-List</Tab>
      <Tab $w={61} $on>Navigator</Tab>
    </TabStrip>
    <TabPage>
      <TreeBox>
        <TreeRows>
          {navTree.map(([cols, name], i) => (
            <Row key={i}>
              <Columns cols={cols} />
              <IconCell $w={19}>
                <Icon name={name === "ILWIS" ? "folderOpen" : "folder"} />
              </IconCell>
              <TreeLabel>{name}</TreeLabel>
            </Row>
          ))}
        </TreeRows>
        <VScroll />
        <HScroll $pad="8px 0 0 17px" $w={171} />
      </TreeBox>
    </TabPage>
  </Side>
);

/* ---------- desktop and catalog window ---------- */

const Desktop = styled.div`
  position: relative;
  flex: 1;
  background: ${DESK};
  border-top: 2px solid #696969;
  border-right: 2px solid #fff;
`;

const CatalogWindow = styled.section`
  position: absolute;
  left: 11px;
  top: 3px;
  width: 190px;
  height: 830px;
  display: flex;
  flex-direction: column;
  padding: 0 8px 7px 7px;
  border: 1px solid #404048;
  border-radius: 6px 6px 0 0;
  box-shadow: inset 0 0 0 1px #eef4fa;
  background: linear-gradient(#bccddd, #d9e5f2 34px);
`;

const CatalogTitle = styled.div`
  display: flex;
  align-items: center;
  flex: none;
  height: 30px;
  padding: 5px 2px 0 1px;
  color: #9aa4ae;
`;

const CatalogButtons = styled.div`
  display: flex;
  gap: 3px;
  margin-left: auto;
`;

const GlassButton = styled.svg`
  display: block;
  width: 31px;
  height: 17px;
  border: 1px solid #7f93ab;
  border-radius: 2px;
  background: linear-gradient(#c6d5e6, #b9cadc 50%, #c4d4e5);
  fill: #fff;
  stroke: #56606c;
`;

const CatalogList = styled.div`
  flex: 1;
  padding: 0 0 0 1px;
  background: #fff;
  border: 1px solid #696969;
  border-right-color: #e3e3e3;
  border-bottom-color: #e3e3e3;
`;

const CatalogItem = styled.div`
  display: flex;
  align-items: center;
  height: 17px;
  font: 12px ${MS};
  letter-spacing: -0.5px;
`;

const CatalogName = styled.span<{ $on?: boolean }>`
  height: 16px;
  padding: 1px 3px 0 2px;
  line-height: 16px;
  background: ${(p) => (p.$on ? FACE : "transparent")};
`;

const catalog: [string, string][] = [
  ...["domain", "raster", "palette"].map((i) => [i, "BEACH"] as [string, string]),
  ...["globe", "domain", "georefGray", "polygon", "raster", "palette"].map((i) => [i, "COLOMBIA"] as [string, string]),
  ...["CONCENTR", "INDUSTRY", "INFRASEG", "INUNDAT", "LANDSLID", "RIVERS", "SEISMIC", "TOPOGRAP", "TSUNAMI", "VOLCANIC"].flatMap(
    (n) => ["domain", "raster", "palette"].map((i) => [i, n] as [string, string])
  ),
  ["folder", ".."], ["drive", "C:"], ["drive", "D:"], ["drive", "E:"], ["drive", "F:"],
];

const Catalog = () => (
  <CatalogWindow>
    <CatalogTitle>
      <Icon name="folder" />
      <TitleText $ml={5}>D:\R.SI...</TitleText>
      <CatalogButtons>
        <GlassButton viewBox="0 0 31 17">
          <rect x="10.500" y="8.500" width="10" height="3.500" rx="1" />
        </GlassButton>
        <GlassButton viewBox="0 0 31 17">
          <path d="M10.500 4.500h10v8h-10zM13.500 7.500v2h4v-2z" fillRule="evenodd" />
        </GlassButton>
        <GlassButton viewBox="0 0 31 17">
          <path d="M10.500 4.500h3l2 2.200 2-2.200h3l-3.500 4 3.500 4h-3l-2-2.200-2 2.200h-3l3.500-4z" />
        </GlassButton>
      </CatalogButtons>
    </CatalogTitle>
    <CatalogList>
      {catalog.map(([icon, name], i) => (
        <CatalogItem key={i}>
          <Icon name={icon} />
          <CatalogName $on={name === "LANDSLID" && icon === "raster"}>{name}</CatalogName>
        </CatalogItem>
      ))}
    </CatalogList>
  </CatalogWindow>
);

/* ---------- map data: polygons in thirds of a screen pixel ---------- */

type Shape = { c: string; p: string };

const shapes: Shape[] = [
  {
    c: "#009900",
    p: "910,142 935,142 955,150 968,162 974,175 966,190 950,208 890,216 875,236 862,258 828,290 795,320 778,345 768,372 773,400 768,440 755,462 735,480 735,488 745,484 765,481 778,488 793,494 798,528 812,552 822,570 836,575 836,605 824,610 825,640 818,667 830,674 852,680 858,700 872,722 915,724 935,730 965,726 990,724 1002,716 1022,716 1035,722 1078,724 1092,740 1110,762 1128,785 1145,806 1162,815 1175,810 1190,805 1230,812 1250,806 1290,802 1310,797 1332,797 1340,802 1367,802 1370,826 1358,840 1345,866 1342,884 1324,902 1331,922 1326,935 1318,945 1313,990 1314,998 1320,1020 1335,1042 1355,1065 1358,1088 1370,1105 1355,1125 1315,1166 1345,1174 1365,1190 1380,1210 1383,1230 1392,1265 1405,1290 1412,1315 1421,1330 1419,1345 1395,1345 1393,1335 1402,1315 1400,1295 1385,1270 1377,1245 1355,1243 1337,1252 1322,1275 1305,1286 1298,1272 1285,1260 1280,1268 1268,1272 1275,1285 1270,1289 1102,1288 1102,1356 1155,1356 1168,1368 1172,1390 1165,1410 1150,1408 1135,1397 1110,1406 1077,1412 1077,1498 1100,1510 1120,1528 1120,1562 1135,1575 1145,1592 1145,1650 1137,1700 1125,1760 1112,1820 1100,1885 1092,1922 1075,1905 1065,1882 1018,1882 1045,1840 1085,1766 1062,1760 1045,1745 1020,1735 1005,1716 985,1710 965,1722 950,1730 925,1728 915,1715 885,1708 870,1724 852,1728 828,1738 800,1728 765,1735 743,1725 743,1672 710,1668 708,1640 692,1610 665,1602 650,1590 618,1585 615,1535 590,1518 568,1498 530,1480 500,1482 450,1462 432,1445 402,1431 392,1450 330,1448 277,1438 277,1405 258,1392 255,1384 215,1382 182,1364 170,1345 150,1338 130,1320 108,1302 122,1290 125,1272 145,1280 165,1285 160,1260 148,1245 150,1222 175,1200 185,1210 215,1208 225,1190 258,1172 262,1150 300,1105 310,1085 325,1065 335,1056 310,1055 290,1042 290,1028 305,1020 297,1000 304,985 295,950 294,888 272,880 304,865 300,830 290,805 303,790 300,765 275,750 262,730 268,712 248,695 258,670 260,633 280,655 300,640 306,615 325,615 318,585 292,550 296,538 315,555 330,570 352,595 343,617 362,615 370,590 368,560 345,550 370,545 402,508 420,500 430,475 460,460 497,450 485,425 495,410 495,375 502,340 515,320 545,302 565,284 595,284 625,297 640,285 648,255 680,250 700,261 745,260 775,240 795,213 845,195 862,178 862,160 883,160 890,168 905,155",
  },
  { c: "#00ff00", p: "400,699 415,700 440,728 455,750 474,770 474,830 486,850 525,843 545,840 545,825 532,808 545,812 560,830 555,850 525,865 488,870 484,900 476,940 462,960 430,987 410,996 405,996 405,980 440,950 450,930 448,908 425,895 418,860 410,825 408,745 422,735 408,712" },
  { c: "#00ff00", p: "516,868 545,875 549,905 549,1010 561,1022 550,1034 520,1038 500,1028 485,1032 465,1050 440,1058 432,1040 440,1022 455,1008 470,975 490,950 492,962 510,962 512,930" },
  { c: "#00ff00", p: "490,866 503,866 503,932 490,932" },
  { c: "#00e6c0", p: "482,934 510,930 510,943 482,943" },
  { c: "#00ffb4", p: "486,784 498,784 498,814 486,814" },
  { c: "#0099c0", p: "620,955 630,958 636,990 646,1010 638,1020 625,1015 605,1008 605,975" },
  { c: "#0099c0", p: "666,1000 690,988 699,1003 690,1015 680,1033 675,1015" },
  { c: "#00ccff", p: "790,610 825,610 823,655 812,685 792,700 776,722 770,735 780,744 800,752 815,768 815,825 803,840 802,865 810,885 805,900 782,908 765,895 763,880 770,860 785,852 797,835 799,805 790,782 766,780 765,826 748,826 745,805 735,805 718,826 712,820 730,785 742,760 742,735 760,735 765,700 785,670" },
  { c: "#0000ff", p: "747,712 765,712 765,732 747,732" },
  { c: "#e6e600", p: "388,1056 399,1056 399,1105 394,1115 384,1112 391,1095" },
  { c: "#e6e600", p: "455,1068 462,1085 450,1100 456,1120 440,1135 432,1155 440,1172 420,1160 418,1150 440,1125 443,1110 432,1105 435,1085" },
  { c: "#e69933", p: "475,1165 490,1165 497,1190 465,1210 462,1235 440,1250 422,1242 422,1222 445,1210 455,1190" },
  { c: "#e69933", p: "460,1252 470,1265 485,1263 492,1250 497,1237 504,1245 490,1265 491,1297 482,1297 475,1278 430,1290 432,1275" },
  { c: "#990000", p: "348,1245 370,1247 365,1257 350,1270 350,1285 362,1305 350,1335 338,1330 308,1325 305,1315 325,1305 335,1280" },
  { c: "#990000", p: "288,1318 299,1325 299,1380 285,1407 277,1400 277,1385 288,1360" },
  { c: "#990000", p: "210,1333 225,1333 257,1360 257,1368 225,1352" },
  { c: "#990000", p: "332,1365 350,1358 352,1348 372,1350 374,1365 350,1365 337,1377" },
];

/* turns a polygon into horizontal runs on a square cell grid, like a raster layer */
const rasterize = (points: string, cell: number) => {
  const pts = points.split(" ").map((s) => s.split(",").map(Number));
  let d = "";
  for (let y = 18; y < 1962; y += cell) {
    const cy = y + cell / 2;
    const xs: number[] = [];
    pts.forEach(([x1, y1], i) => {
      const [x2, y2] = pts[(i + 1) % pts.length];
      if (y1 <= cy !== y2 <= cy) xs.push(x1 + ((cy - y1) / (y2 - y1)) * (x2 - x1));
    });
    xs.sort((a, b) => a - b);
    for (let k = 0; k + 1 < xs.length; k += 2) {
      const a = 30 + Math.round((xs[k] - 30) / cell) * cell;
      const b = 30 + Math.round((xs[k + 1] - 30) / cell) * cell;
      if (b > a) d += `M${a} ${y}h${b - a}v${cell}h${a - b}z`;
    }
  }
  return d;
};

const fine = shapes.map((s) => ({ c: s.c, d: rasterize(s.p, 6) }));

const MapSvg = styled.svg<{ $w: number; $h: number }>`
  display: block;
  flex: none;
  width: ${(p) => p.$w}px;
  height: ${(p) => p.$h}px;
  background: #fff;
  shape-rendering: crispEdges;
`;

const ColombiaMap = ({ w, h }: { w: number; h: number }) => (
  <MapSvg $w={w} $h={h} viewBox="30 18 1416 1944" preserveAspectRatio="none">
    {fine.map((s, i) => (
      <path key={i} d={s.d} fill={s.c} />
    ))}
  </MapSvg>
);

/* ---------- map window ---------- */

const MapWindow = styled.section`
  position: absolute;
  left: 207px;
  top: 2px;
  width: 1377px;
  height: 871px;
  display: flex;
  flex-direction: column;
  background: ${FACE};
  border: 1px solid #8c8c8c;
  border-radius: 8px;
  overflow: hidden;
`;

const ScaleBox = styled.div`
  width: 81px;
  height: 17px;
  margin-left: 3px;
  padding-left: 2px;
  border: 1px solid #6d6d6d;
  font: 11px "DejaVu Sans", sans-serif;
  -webkit-text-stroke: 0.4px #6d6d6d;
  line-height: 15px;
  color: #6d6d6d;
`;

const EndLine = styled.div<{ $ml: number }>`
  align-self: stretch;
  width: 1px;
  margin-left: ${(p) => p.$ml}px;
  background: #a0a0a0;
`;

const MapBody = styled.div`
  display: flex;
  flex: 1;
  min-height: 0;
`;

const LayerPane = styled.div`
  display: flex;
  flex-direction: column;
  flex: none;
  width: 234px;
  border-right: 1px solid #a0a0a0;
`;

const LayerTree = styled.div`
  display: flex;
  flex-direction: column;
  flex: none;
  width: 228px;
  height: 538px;
  background: #fff;
  border: 1px solid #808080;
  border-top: 1px solid #696969;
  border-right: 1px solid #e3e3e3;
  border-bottom: 1px solid #fff;
  overflow: hidden;
`;

const LayerRows = styled.div`
  flex: 1;
  padding: 1px 0 0 0;
`;

const LayerLabel = styled.span<{ $ml: number; $ls?: number }>`
  margin-left: ${(p) => p.$ml}px;
  line-height: 16px;
  white-space: nowrap;
  letter-spacing: ${(p) => p.$ls ?? -0.35}px;
`;

const CheckMark = styled.svg`
  width: 18px;
  height: 18px;
  flex: none;
  margin: 0 3px 0 -4px;
  shape-rendering: crispEdges;
`;

const Swatch = styled.div<{ $c: string }>`
  width: 25px;
  height: 17px;
  flex: none;
  margin-left: -1px;
  border: 1px solid #000;
  background: ${(p) => p.$c};
`;

const LayerScroll = styled.div`
  flex: none;
  height: 16px;
  background: ${FACE};
`;

const Splitter = styled.div`
  flex: none;
  height: 11px;
  margin: 1px 0 0 3px;
  width: 227px;
  border: 1px solid #fff;
  border-bottom-color: #a0a0a0;
  border-right-color: #a0a0a0;
  background: linear-gradient(transparent 4px, #a0a0a0 4px 5px, #fff 5px 6px, transparent 6px);
`;

const Overview = styled.div`
  display: flex;
  flex: none;
  width: 228px;
  height: 193px;
  padding-left: 42px;
  background: ${DESK};
  border: 1px solid #696969;
  border-right-color: #e3e3e3;
  border-bottom-color: #e3e3e3;
`;

const ViewArea = styled.div`
  display: grid;
  grid-template-columns: 1fr 17px;
  grid-template-rows: 754px 18px;
  flex: 1;
  margin-right: 2px;
  border-left: 1px solid #696969;
  border-top: 1px solid #696969;
`;

const Canvas = styled.div`
  position: relative;
  background: ${DESK};
`;

const MapSheet = styled.div`
  position: absolute;
  left: 324px;
  top: 52px;
`;

const ScrollV = styled.div`
  display: flex;
  flex-direction: column;
  justify-content: space-between;
  align-items: center;
  padding: 5px 0 4px;
  border-left: 1px solid #fff;
`;

const ScrollH = styled.div`
  display: flex;
  justify-content: space-between;
  align-items: center;
  padding: 0 5px 1px 4px;
  border-top: 1px solid #fff;
`;

const Arrow = styled.svg`
  width: 8px;
  height: 8px;
  fill: #a3a3a3;
`;

const MapStatus = styled.div`
  display: flex;
  flex: none;
  align-items: flex-end;
  justify-content: flex-end;
  gap: 3px;
  height: 20px;
  padding: 0 0 1px;
  border-top: 1px solid #a0a0a0;
`;

const StatusCell = styled.div<{ $w: number; $ls: number }>`
  width: ${(p) => p.$w}px;
  height: 15px;
  padding-left: 1px;
  line-height: 13px;
  border: 1px solid #a0a0a0;
  border-right-color: #fff;
  border-bottom-color: #fff;
  white-space: pre;
  letter-spacing: ${(p) => p.$ls}px;
`;

const SizeGrip = styled.svg`
  width: 15px;
  height: 12px;
  stroke: #a0a0a0;
`;

const legend: [string, string][] = [
  ["#990000", "Narino"],
  ["#e69933", "Region Huila"],
  ["#e6e600", "Valle de Cauca"],
  ["#00ff00", "Zona Cafetera"],
  ["#00e6c5", "Manizales area"],
  ["#00ffb8", "Valle de Aburra"],
  ["#0099c4", "Cundinamarca"],
  ["#00ccff", "Boyaca y Santader"],
  ["#0000ff", "Bucaramanga"],
  ["#009900", "No landslide hazard"],
];

const Resize = () => (
  <SizeGrip viewBox="0 0 15 12">
    <path d="M2 12L14 1M6 12l8-7M10 12l4-3.500" />
  </SizeGrip>
);

const MapView = () => (
  <MapWindow>
    <TitleBar $h={30} $pad="0 17px 3px 7px">
      <Icon name="gridPage" />
      <TitleText $ml={5} $ls={-0.24}>LANDSLID: Regions with landslide problems - ILWIS</TitleText>
      <Captions gap={35} />
    </TitleBar>
    <Menu items={["File", "Edit", "Layers", "Options", "Help"]} h={19} pad={6} gap={14} />
    <Rule />
    <Bar $h={24} $pad={3}>
      <Handle $mr={3} />
      <Tools list="cyanPage screenGray | measure hand zoomIn zoomOut *pointer | layerAdd layerDel save" />
      <EndLine $ml={2} />
      <Handle $mr={1} $ml={4} />
      <ScaleBox>1:11753856</ScaleBox>
      <EndLine $ml={2} />
    </Bar>
    <MapBody>
      <LayerPane>
        <Grip w={214} h={14} pb={3} />
        <LayerTree>
          <LayerRows>
            <Row>
              <Indent $v="blank"><Box open /></Indent>
              <CheckMark viewBox="0 0 18 18">
                <path d="M1.500 2v1M1.500 4.500v4M0 8.500h4M0 4.500h2" stroke="#0000c0" />
                <rect x="5.500" y="4.500" width="11" height="11" fill="#fff" stroke="#000" />
                <path d="M7 9l3 4 5-7" fill="none" stroke="#0000c0" strokeWidth="1.400" />
              </CheckMark>
              <Icon name="raster" />
              <LayerLabel $ml={4} $ls={-0.22}>LANDSLID - Regions with landsli</LayerLabel>
            </Row>
            <Row><Columns cols="_-" /><Icon name="props" /><LayerLabel $ml={5}>Properties</LayerLabel></Row>
            <Row><Columns cols="_|+" /><Icon name="domain" /><LayerLabel $ml={5} $ls={-0.26}>landslid - Domain Class</LayerLabel></Row>
            <Row><Columns cols="_|P" /><Icon name="georefGray" /><LayerLabel $ml={5}>colombia - GeoReference Co</LayerLabel></Row>
            <Row><Columns cols="_M" /><Icon name="legend" /><LayerLabel $ml={5}>Legend</LayerLabel></Row>
            {legend.map(([c, n], i) => (
              <Row key={n}>
                <Columns cols={i === legend.length - 1 ? "__L" : "__t"} />
                <Swatch $c={c} />
                <LayerLabel $ml={2}>{n}</LayerLabel>
              </Row>
            ))}
          </LayerRows>
          <LayerScroll>
            <HScroll $pad="7px 0 0 17px" $w={146} />
          </LayerScroll>
        </LayerTree>
        <Splitter />
        <Grip w={214} h={14} pb={2} />
        <Overview>
          <ColombiaMap w={139} h={191} />
        </Overview>
      </LayerPane>
      <ViewArea>
        <Canvas>
          <MapSheet>
            <ColombiaMap w={472} h={648} />
          </MapSheet>
        </Canvas>
        <ScrollV>
          <Arrow viewBox="0 0 8 8"><path d="M0 7l4-6 4 6z" /></Arrow>
          <Arrow viewBox="0 0 8 8"><path d="M0 1l4 6 4-6z" /></Arrow>
        </ScrollV>
        <ScrollH>
          <Arrow viewBox="0 0 8 8"><path d="M7 0L1 4l6 4z" /></Arrow>
          <Arrow viewBox="0 0 8 8"><path d="M1 0l6 4-6 4z" /></Arrow>
        </ScrollH>
      </ViewArea>
    </MapBody>
    <MapStatus>
      <StatusCell $w={57} $ls={-0.45}>301,338</StatusCell>
      <StatusCell $w={155} $ls={-0.62}>{"(  1479307.19,   852511.79)"}</StatusCell>
      <Resize />
    </MapStatus>
  </MapWindow>
);

/* ---------- domain class window ---------- */

const DomainWindow = styled.section`
  position: absolute;
  left: 453px;
  top: 131px;
  width: 308px;
  height: 620px;
  display: flex;
  flex-direction: column;
  background: ${FACE};
  border: 1px solid #8c8c8c;
  border-radius: 8px;
  overflow: hidden;
  box-shadow: 0 0 2px rgba(0, 0, 0, 0.15);
`;

const DescriptionBar = styled.div`
  display: flex;
  align-items: center;
  flex: none;
  height: 20px;
  padding: 0 5px 0 3px;
  border-bottom: 1px solid #a0a0a0;
  font: 11px ${MS};
`;

const DescriptionLabel = styled.span`
  width: 64px;
  padding: 0 0 1px 3px;
  letter-spacing: -0.15px;
`;

const DescriptionField = styled.div`
  flex: 1;
  height: 18px;
  padding: 0 0 0 2px;
  line-height: 15px;
  background: #fff;
  border: 1px solid #696969;
  border-top-width: 2px;
  border-right-color: #e3e3e3;
  border-bottom: 0;
  letter-spacing: -0.1px;
`;

const Grid = styled.div`
  flex: none;
  height: 499px;
  margin: 0 2px 0 1px;
  background: #fff;
  border: 1px solid #696969;
  border-right-color: #e3e3e3;
  border-bottom: 0;
  font: 11px ${MS};
`;

const GridHead = styled.div`
  display: grid;
  grid-template-columns: 161px 63px 1fr;
  height: 17px;
  background: ${FACE};
  border-bottom: 1px solid #696969;
`;

const HeadCell = styled.span`
  padding-left: 5px;
  line-height: 16px;
  border: 1px solid #fff;
  border-right-color: #696969;
  border-bottom-color: #c0c0c0;
  overflow: hidden;
`;

const GridRows = styled.div`
  padding: 3px 0 0 4px;
`;

const GridRow = styled.div`
  height: 14px;
  line-height: 14px;
  letter-spacing: -0.14px;
`;

const DomainFoot = styled.div`
  display: flex;
  flex: 1;
  align-items: flex-end;
  justify-content: flex-end;
`;

const DomainClass = () => (
  <DomainWindow>
    <TitleBar $h={30} $pad="0 17px 2px 8px">
      <Icon name="domain" />
      <TitleText $ml={5} $ls={-0.25}>Domain Class "landslid"...</TitleText>
      <Captions gap={35} />
    </TitleBar>
    <Menu items={["File", "Edit", "View", "Help"]} h={20} pad={7} gap={14} />
    <Rule />
    <DescriptionBar>
      <Handle $mr={3} />
      <DescriptionLabel>Description</DescriptionLabel>
      <DescriptionField>Domain Class "landslid"</DescriptionField>
      <Handle $mr={0} $ml={2} />
    </DescriptionBar>
    <Bar $h={25} $pad={4}>
      <Handle $mr={3} />
      <Tools list="edit domainAdd domainDel | copy paste | sortAZ sortaz *sortHand | palette | print" />
      <EndLine $ml={2} />
    </Bar>
    <Grid>
      <GridHead>
        <HeadCell>Class Name</HeadCell>
        <HeadCell>Code</HeadCell>
        <HeadCell>Description</HeadCell>
      </GridHead>
      <GridRows>
        {legend.map(([, n]) => (
          <GridRow key={n}>{n}</GridRow>
        ))}
      </GridRows>
    </Grid>
    <DomainFoot>
      <Resize />
    </DomainFoot>
  </DomainWindow>
);

/* ---------- status bar ---------- */

const StatusBar = styled.div`
  display: flex;
  flex: 1;
  padding-top: 3px;
  border-top: 1px solid #a0a0a0;
  letter-spacing: -0.34px;
`;

const Hint = styled.div`
  width: 402px;
  padding: 1px 0 0 2px;
  line-height: 16px;
`;

const Slot = styled.div<{ $w?: number }>`
  ${(p) => (p.$w ? `width: ${p.$w}px;` : "flex: 1;")}
  margin-right: 2px;
  padding-left: 1px;
  line-height: 16px;
  border-left: 1px solid #a0a0a0;
  border-top: 1px solid #a0a0a0;
  border-right: 1px solid #fff;
`;

export default function App() {
  return (
    <Frame>
      <Global />
      <PatternDefs />
      <TitleBar $h={23} $pad="0 19px 1px 2px">
        <Icon name="logo" />
        <TitleText $ml={5}>ILWIS 3.31 Academic - D:\R.SIGE\file\data\ILWIS</TitleText>
        <Captions gap={35} restore />
      </TitleBar>
      <Menu items={["File", "Edit", "Operations", "View", "Window", "Help"]} h={20} pad={7} gap={14} keys />
      <Rule />
      <Bar $h={23} $pad={4}>
        <Handle $mr={3} />
        <Tools list="open screenMap info | copy pasteGray cross props | glasses *largeIcons details upFolder" />
        <EndLine $ml={2} />
      </Bar>
      <Rule />
      <Bar $h={23} $pad={4}>
        <Handle $mr={3} />
        <Tools
          boxed
          list="logoTeal | raster polygon segment point table | mapList objColl mapView layout txt graph | domain palette georef globe | hist histMap histPoly histPts | sampleSet stereo tree table2 matrix filter fn script | yFolder form"
        />
        <EndLine $ml={2} />
      </Bar>
      <Rule />
      <Command>
        <Handle $mr={5} />
        <CommandField>
          <CommandText>open 'D:\R.SIGE\file\data\ILWIS\LANDSLID'.mpr</CommandText>
          <DropButton />
        </CommandField>
        <Handle $mr={0} $ml={3} />
      </Command>
      <Body>
        <Navigator />
        <Desktop>
          <Catalog />
          <MapView />
          <DomainClass />
        </Desktop>
      </Body>
      <StatusBar>
        <Hint>Type an expression on the command line</Hint>
        <Slot>Query : None</Slot>
        <Slot $w={18} />
        <Slot $w={18} />
        <Slot $w={18} />
        <Slot $w={18} />
        <Slot $w={18} />
      </StatusBar>
    </Frame>
  );
}
